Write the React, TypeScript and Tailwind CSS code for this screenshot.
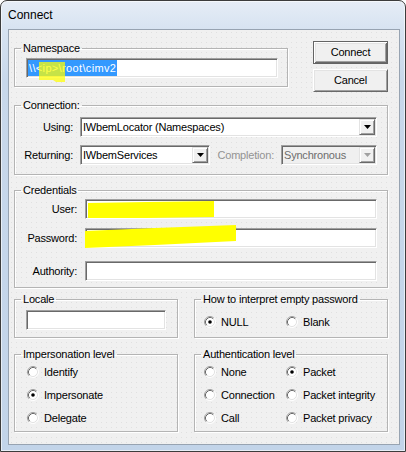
import type { ReactNode } from "react"

function Group({ label, className = "", children }: { label: string; className?: string; children?: ReactNode }) {
  return (
    <fieldset className={`min-w-0 border border-[#b4b4b4] shadow-[inset_1px_1px_0_#fff,1px_1px_0_#fff] ${className}`}>
      <legend className="ml-[6px] px-[2px] leading-[13px]">{label}</legend>
      {children}
    </fieldset>
  )
}

function Edit({ className = "", children }: { className?: string; children?: ReactNode }) {
  return (
    <div className={`relative flex h-[20px] items-center border border-t-[#a0a0a0] border-l-[#a0a0a0] border-r-white border-b-white bg-white shadow-[inset_1px_1px_0_#696969,inset_-1px_-1px_0_#e3e3e3] ${className}`}>
      {children}
    </div>
  )
}

function Combo({ text, className = "", disabled = false }: { text: string; className?: string; disabled?: boolean }) {
  return (
    <div className={`flex h-[20px] items-center border border-t-[#a0a0a0] border-l-[#a0a0a0] border-r-white border-b-white shadow-[inset_1px_1px_0_#696969,inset_-1px_-1px_0_#e3e3e3] ${disabled ? "bg-[#f0f0f0] text-[#6d6d6d]" : "bg-white"} ${className}`}>
      <span className="flex-1 truncate pl-[2px] leading-[13px]">{text}</span>
      <span className="mr-[1px] flex h-[16px] w-[16px] items-center justify-center border border-t-[#e3e3e3] border-l-[#e3e3e3] border-r-[#696969] border-b-[#696969] bg-[#f0f0f0] shadow-[inset_1px_1px_0_#fff,inset_-1px_-1px_0_#a0a0a0]">
        <svg width="7" height="4" viewBox="0 0 7 4">
          <path d="M0 0h7L3.5 4z" fill={disabled ? "#a0a0a0" : "#000"} />
        </svg>
      </span>
    </div>
  )
}

function PushButton({ children, isDefault = false }: { children: ReactNode; isDefault?: boolean }) {
  return (
    <button
      type="button"
      className={`h-[23px] w-[75px] bg-[#f0f0f0] leading-[13px] ${
        isDefault
          ? "border border-[#646464] shadow-[inset_1px_1px_0_#fff,inset_-1px_-1px_0_#696969,inset_2px_2px_0_#e3e3e3,inset_-2px_-2px_0_#a0a0a0]"
          : "border border-t-white border-l-white border-r-[#696969] border-b-[#696969] shadow-[inset_1px_1px_0_#e3e3e3,inset_-1px_-1px_0_#a0a0a0]"
      }`}
    >
      {children}
    </button>
  )
}

function Radio({ label, checked = false }: { label: string; checked?: boolean }) {
  return (
    <div className="flex h-[14px] items-center gap-[5px]">
      <svg width="12" height="12" viewBox="0 0 12 12" className="shrink-0">
        <circle cx="6" cy="6" r="5" fill="#fff" />
        <path d="M2.11 9.89A5.5 5.5 0 0 1 9.89 2.11" fill="none" stroke="#a0a0a0" />
        <path d="M9.89 2.11A5.5 5.5 0 0 1 2.11 9.89" fill="none" stroke="#fff" />
        <path d="M2.82 9.18A4.5 4.5 0 0 1 9.18 2.82" fill="none" stroke="#696969" />
        <path d="M9.18 2.82A4.5 4.5 0 0 1 2.82 9.18" fill="none" stroke="#e3e3e3" />
        {checked && <circle cx="6" cy="6" r="1.8" fill="#000" />}
      </svg>
      <span className="whitespace-nowrap leading-[13px]">{label}</span>
    </div>
  )
}

export default function App() {
  return (
    <div className="h-[452px] w-[406px] overflow-hidden bg-white font-['Liberation_Sans',Arial,sans-serif] text-[11px] tracking-[-0.2px] text-black">
      <div className="flex h-[452px] w-[406px] flex-col rounded-t-[7px] border border-[#3c3c3c] bg-[linear-gradient(180deg,#e6edf6_0px,#d7e3f1_28px,#c8d8eb_80px,#c2d4e9_100%)] pb-[6px] pl-[7px] pr-[5px] shadow-[inset_0_0_0_1px_rgba(255,255,255,0.6)]">
        <div className="flex h-[28px] items-center text-[12px] tracking-normal">Connect</div>

        <div className="flex-1 border border-[#97a3b1] bg-[#f0f0f0] bg-[radial-gradient(circle,#e0e0e0_0.7px,transparent_1px)] bg-[length:5px_5px] pl-[5px]">
          {/* namespace + buttons */}
          <div className="mt-[11px] flex items-start">
            <Group label="Namespace" className="mt-[1px] w-[274px] pb-[8px]">
              <Edit className="ml-[11px] mt-[3px] w-[252px]">
                <span className="ml-[1px] bg-[#3399ff] px-[1px] leading-[16px] tracking-[0.35px] text-white">\\&lt;ip&gt;\root\cimv2</span>
                <svg className="absolute left-[11px] top-[2px] overflow-visible" width="28" height="22">
                  <polygon points="1,1 27,1 27,21 18,21 15,19 1,19" fill="#ffff00" fillOpacity="0.72" />
                </svg>
              </Edit>
            </Group>
            <div className="ml-[25px] flex flex-col gap-[5px]">
              <PushButton isDefault>Connect</PushButton>
              <PushButton>Cancel</PushButton>
            </div>
          </div>

          {/* connection */}
          <Group label="Connection:" className="mt-[7px] w-[374px] pb-[9px] pr-[10px]">
            <div className="mt-[5px] flex items-center">
              <span className="w-[58px] text-right leading-[13px]">Using:</span>
              <Combo className="ml-[7px] w-[297px]" text="IWbemLocator (Namespaces)" />
            </div>
            <div className="mt-[8px] flex items-center">
              <span className="w-[58px] text-right leading-[13px]">Returning:</span>
              <Combo className="ml-[7px] w-[130px]" text="IWbemServices" />
              <span className="ml-auto leading-[13px] text-[#939393]">Completion:</span>
              <Combo className="ml-[7px] w-[96px]" text="Synchronous" disabled />
            </div>
          </Group>

          {/* credentials */}
          <Group label="Credentials" className="mt-[9px] w-[374px] pb-[6px] pr-[10px]">
            <div className="mt-[2px] flex items-center">
              <span className="w-[62px] text-right leading-[13px]">User:</span>
              <Edit className="ml-[8px] w-[292px]">
                <svg className="absolute left-[1px] top-[1px] overflow-visible" width="128" height="18">
                  <polygon points="1,2 60,1 127,0 127,16 60,17 1,17" fill="#ffff00" />
                </svg>
              </Edit>
            </div>
            <div className="mt-[9px] flex items-center">
              <span className="w-[62px] text-right leading-[13px]">Password:</span>
              <Edit className="ml-[8px] w-[292px]">
                <svg className="absolute left-[-1px] top-[-1px] overflow-visible" width="152" height="22">
                  <polygon points="0,3 70,0 151,-3 151,13 70,17 0,20" fill="#ffff00" />
                </svg>
              </Edit>
            </div>
            <div className="mt-[13px] flex items-center">
              <span className="w-[62px] text-right leading-[13px]">Authority:</span>
              <Edit className="ml-[8px] w-[292px]" />
            </div>
          </Group>

          {/* locale + empty password */}
          <div className="mt-[5px] flex gap-[16px]">
            <Group label="Locale" className="w-[164px] pb-[7px]">
              <Edit className="ml-[11px] mt-[4px] w-[140px]" />
            </Group>
            <Group label="How to interpret empty password" className="w-[194px] pb-[8px]">
              <div className="mt-[9px] flex pl-[9px]">
                <div className="w-[82px]">
                  <Radio label="NULL" checked />
                </div>
                <Radio label="Blank" />
              </div>
            </Group>
          </div>

          {/* impersonation + authentication */}
          <div className="mt-[10px] flex gap-[16px]">
            <Group label="Impersonation level" className="w-[164px] pb-[6px]">
              <div className="mt-[4px] flex flex-col gap-[9px] pl-[12px]">
                <Radio label="Identify" />
                <Radio label="Impersonate" checked />
                <Radio label="Delegate" />
              </div>
            </Group>
            <Group label="Authentication level" className="w-[194px] pb-[6px]">
              <div className="mt-[4px] grid grid-cols-[82px_auto] gap-y-[9px] pl-[9px]">
                <Radio label="None" />
                <Radio label="Packet" checked />
                <Radio label="Connection" />
                <Radio label="Packet integrity" />
                <Radio label="Call" />
                <Radio label="Packet privacy" />
              </div>
            </Group>
          </div>
        </div>
      </div>
    </div>
  )
}
